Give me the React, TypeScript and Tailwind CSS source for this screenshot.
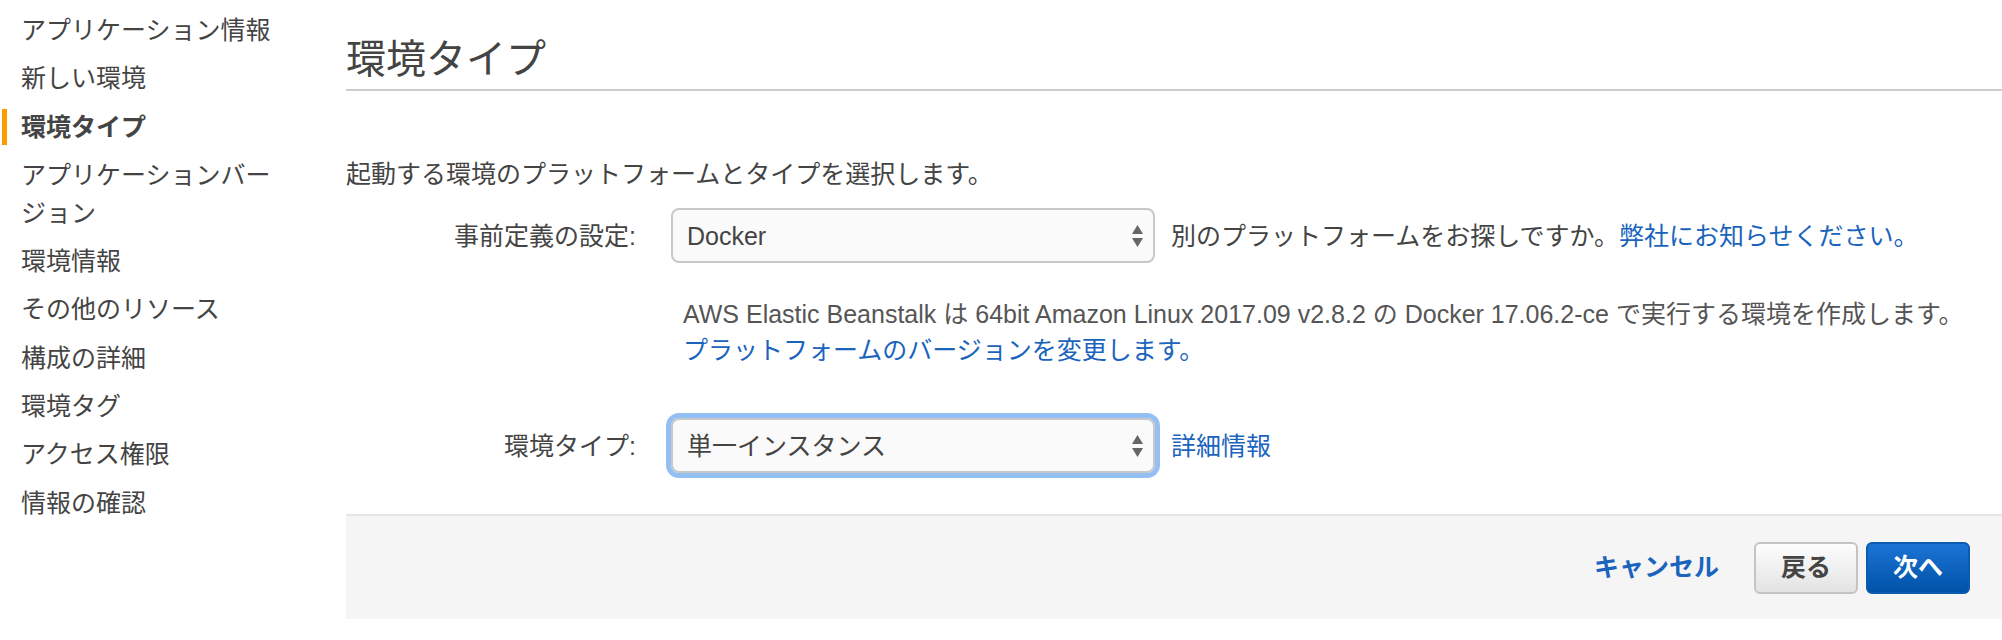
import React from "react";

const navItems = [
  "アプリケーション情報",
  "新しい環境",
  "環境タイプ",
  "アプリケーションバージョン",
  "環境情報",
  "その他のリソース",
  "構成の詳細",
  "環境タグ",
  "アクセス権限",
  "情報の確認",
];

const activeItem = "環境タイプ";

// up/down arrows drawn at the right of the fake select
const SelectArrows = () => (
  <svg width="13" height="24" viewBox="0 0 13 24" className="shrink-0">
    <path d="M6.5 1 L12 10 L1 10 Z" fill="#666" />
    <path d="M1 14 L12 14 L6.5 23 Z" fill="#666" />
  </svg>
);

interface FakeSelectProps {
  value: string;
  focused?: boolean;
}

const FakeSelect = ({ value, focused = false }: FakeSelectProps) => (
  <div
    className={`ml-[35px] flex h-[55px] w-[484px] shrink-0 items-center justify-between rounded-[8px] border-2 border-[#c8c8c8] bg-[#fafafa] pl-[14px] pr-[9px] text-[25px] text-[#444] ${
      focused ? "outline-[5px] outline-solid outline-[#93bff2]" : ""
    }`}
  >
    <span className="leading-[36px]">{value}</span>
    <SelectArrows />
  </div>
);

export default function App() {
  return (
    <div className="flex h-[640px] w-full bg-white font-['Liberation_Sans','Noto_Sans_CJK_JP',sans-serif] text-[#444]">
      {/* menu de etapas */}
      <aside className="flex w-[346px] shrink-0 flex-col gap-[10.3px] pt-[11px]">
        {navItems.map((item) => (
          <div key={item} className="flex items-center">
            <div className="flex w-[21px] shrink-0">
              {item === activeItem && <span className="ml-[2px] h-[36px] w-[5px] bg-[#ff9900]" />}
            </div>
            <span
              className={`w-[262px] text-[25px] leading-[38px] text-[#444] ${
                item === activeItem ? "font-bold" : "font-normal"
              }`}
            >
              {item}
            </span>
          </div>
        ))}
      </aside>

      <main className="flex min-w-0 flex-1 flex-col">
        <div className="pt-[35px]">
          <h1 className="text-[40px] font-normal leading-[48px] text-[#444]">環境タイプ</h1>
          <div className="mt-[6px] h-[2px] bg-[#cccccc]" />
        </div>

        <p className="mt-[65px] text-[25px] leading-[36px]">
          起動する環境のプラットフォームとタイプを選択します。
        </p>

        <div className="mt-[16px] flex items-center">
          <label className="w-[290px] shrink-0 text-right text-[25px] leading-[36px]">事前定義の設定:</label>
          <FakeSelect value="Docker" />
          <span className="ml-[16px] whitespace-nowrap text-[25px] leading-[36px]">
            別のプラットフォームをお探しですか。
            <a className="text-[#1a64bd]">弊社にお知らせください。</a>
          </span>
        </div>

        <div className="mt-[33px] pl-[337px] text-[25px] leading-[36px] text-[#555]">
          <p>
            AWS Elastic Beanstalk は 64bit Amazon Linux 2017.09 v2.8.2 の Docker 17.06.2-ce で実行する環境を作成します。
          </p>
          <a className="text-[#1a64bd]">プラットフォームのバージョンを変更します。</a>
        </div>

        <div className="mt-[50px] flex items-center">
          <label className="w-[290px] shrink-0 text-right text-[25px] leading-[36px]">環境タイプ:</label>
          <FakeSelect value="単一インスタンス" focused />
          <a className="ml-[16px] text-[25px] leading-[36px] text-[#1a64bd]">詳細情報</a>
        </div>

        <div className="mt-[41px] flex h-[105px] items-center justify-end gap-[8px] border-t-2 border-[#e6e6e6] bg-[#f5f5f5] pr-[32px]">
          <a className="mr-[27px] text-[25px] font-bold text-[#1a64bd]">キャンセル</a>
          <button className="h-[52px] w-[104px] rounded-[6px] border-2 border-[#c4c4c4] bg-gradient-to-b from-[#fdfdfd] to-[#e3e3e3] text-[25px] font-bold text-[#444]">
            戻る
          </button>
          <button className="h-[52px] w-[104px] rounded-[6px] border-2 border-[#0b5bb0] bg-gradient-to-b from-[#1b74d6] to-[#0052a6] text-[25px] font-bold text-white">
            次へ
          </button>
        </div>
      </main>
    </div>
  );
}
